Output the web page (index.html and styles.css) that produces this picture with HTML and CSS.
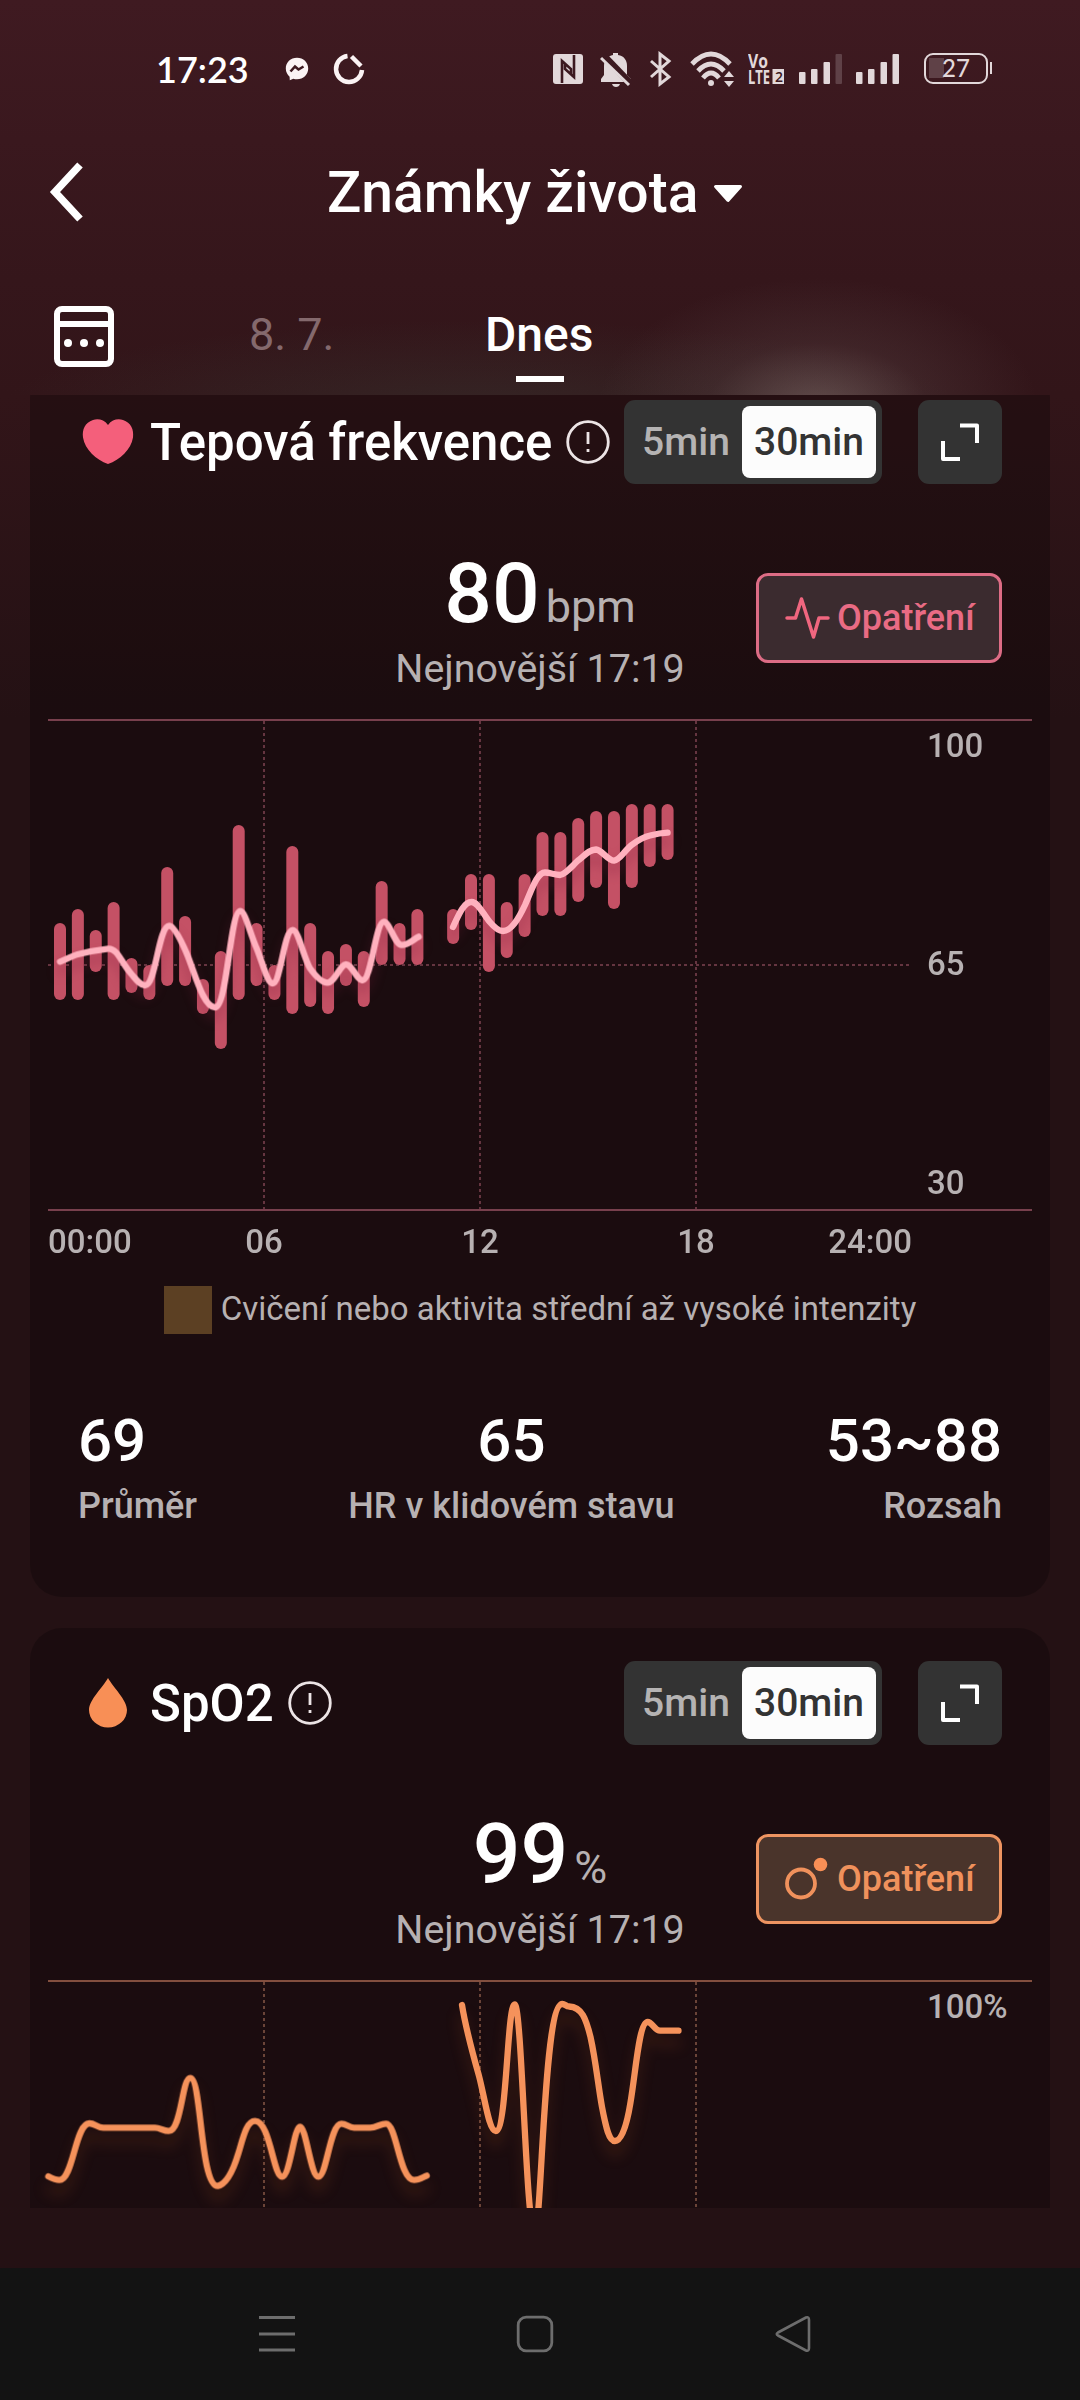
FILE: index.html
```
<!DOCTYPE html>
<html lang="cs">
<head>
  <meta charset="UTF-8" />
  <meta name="viewport" content="width=device-width, initial-scale=1.0"/>
  <title>Známky života</title>
  <link rel="stylesheet" href="styles.css">
</head>
<body>

  <header class="header">
    <div class="status">
      <span class="clock">17:23</span>
      <svg class="messenger" width="24" height="24" viewBox="0 0 24 24">
        <path d="M12 .8C5.600.8.8 5.400.8 11.500c0 3.300 1.500 6.200 3.800 8.200l.2 3.500 3.500-1.500c1.200.4 2.400.5 3.700.5 6.400 0 11.200-4.600 11.200-10.700S18.400.8 12 .8z" fill="#fbf3f4"/>
        <path d="M5.500 14.500l4.500-5 3.500 3 5-3" fill="none" stroke="#3d1920" stroke-width="2.600"/>
      </svg>
      <svg class="saver" width="32" height="32" viewBox="0 0 32 32" fill="none" stroke="#fbf3f4" stroke-width="4.500">
        <path d="M14.500 3A13 13 0 1 0 29 17"/>
        <path d="M18.500 3.500L28 13"/>
      </svg>

      <div class="status-right">
        <svg width="30" height="32" viewBox="0 0 30 32">
          <rect y="1" width="30" height="30" rx="3" fill="#e2d8da"/>
          <path d="M9 30V8l9 8v5M21 2v22l-9-8v-5" fill="none" stroke="#3c1920" stroke-width="2.600"/>
        </svg>
        <svg class="bell" width="32" height="36" viewBox="0 0 32 36">
          <path d="M4 24V15C4 9 8 5 13 4V2h5v2c6 1 9 5 9 11v9l4 4v3H1v-3z" fill="#e2d8da"/>
          <path d="M12 33h8q-1 3-4 3t-4-3z" fill="#e2d8da"/>
          <path d="M3 4l28 29" stroke="#3c1920" stroke-width="7"/>
          <path d="M1 7l28 27" stroke="#e2d8da" stroke-width="3"/>
        </svg>
        <svg class="bt" width="22" height="36" viewBox="0 0 22 36" fill="none" stroke="#e2d8da" stroke-width="3">
          <path d="M1 10l18 16-9 7V3l9 7L1 26"/>
        </svg>
        <svg class="wifi" width="46" height="36" viewBox="0 0 46 36" fill="none" stroke="#e2d8da" stroke-width="4.800">
          <path d="M2 13Q21-7 40 13"/>
          <path d="M8 20Q21 6 34 20"/>
          <path d="M13 27Q21 17 29 27"/>
          <circle cx="21" cy="32" r="3" fill="#e2d8da" stroke="none"/>
          <path d="M34 26l5-6 5 6zM34 30l5 6 5-6z" fill="#e2d8da" stroke="none"/>
        </svg>
        <svg class="volte" width="37" height="32" viewBox="0 0 37 32">
          <text x="0" y="14.500" textLength="20" lengthAdjust="spacingAndGlyphs">Vo</text>
          <text x="0" y="31" textLength="22" lengthAdjust="spacingAndGlyphs">LTE</text>
          <rect x="24.500" y="16" width="11.500" height="15" fill="#e2d8da"/>
          <text class="sim" x="27" y="29">2</text>
        </svg>
        <svg class="signal" width="44" height="32" viewBox="0 0 44 32" fill="#e2d8da">
          <rect y="19" width="6.500" height="12" rx="1"/>
          <rect x="12" y="16" width="6.500" height="15" rx="1"/>
          <rect x="24.500" y="9" width="6.500" height="22" rx="1"/>
          <rect x="36.500" y="1" width="6.500" height="30" rx="1" fill="#5f4147"/>
        </svg>
        <svg class="signal2" width="44" height="32" viewBox="0 0 44 32" fill="#e2d8da">
          <rect y="19" width="6.500" height="12" rx="1"/>
          <rect x="12" y="16" width="6.500" height="15" rx="1"/>
          <rect x="24.500" y="9" width="6.500" height="22" rx="1"/>
          <rect x="36.500" y="1" width="6.500" height="30" rx="1"/>
        </svg>
        <div class="battery">27</div>
      </div>
    </div>

    <div class="appbar">
      <svg class="back" width="38" height="62" viewBox="0 0 38 62">
        <path d="M32 4L7 31l25 27" fill="none" stroke="#fff" stroke-width="7.500"/>
      </svg>
      <h1>Známky života</h1>
      <svg class="caret" width="30" height="20" viewBox="0 0 30 20">
        <path d="M2.500 2.500h25L15 16.500z" fill="#fff" stroke="#fff" stroke-width="3" stroke-linejoin="round"/>
      </svg>
    </div>

    <div class="dates">
      <svg class="calendar" width="62" height="62" viewBox="0 0 62 62" fill="none" stroke="#fff" stroke-width="6">
        <rect x="4" y="4" width="54" height="55" rx="5"/>
        <path d="M4 19h54"/>
        <g fill="#fff" stroke="none">
          <circle cx="15" cy="38" r="4"/>
          <circle cx="31" cy="38" r="4"/>
          <circle cx="47" cy="38" r="4"/>
        </g>
      </svg>
      <span class="date">8. 7.</span>
      <span class="date active">Dnes</span>
    </div>
  </header>

  <main class="scroller">
    <section class="card heart">
      <div class="card-head">
        <svg class="card-icon" width="60" height="60" viewBox="0 0 60 60">
          <path d="M30 13C26 7.500 20 6.500 15 8 7 10.500 4 17.500 5 25.500c2 12 13 22.500 25 26.500 12-4 23-14.500 25-26.500 1-8-2-15-10-17.500C40 6.500 34 7.500 30 13z" fill="#f45f7b"/>
        </svg>
        <h2>Tepová frekvence</h2>
        <svg class="info" width="44" height="44" viewBox="0 0 44 44" fill="none" stroke="#ece4e5" stroke-width="2.800">
          <circle cx="22" cy="22" r="20.300"/>
          <path d="M22 12v12M22 29v3"/>
        </svg>
        <div class="toggle"><span>5min</span><span class="on">30min</span></div>
        <button class="expand">
          <svg width="40" height="40" viewBox="0 0 40 40" fill="none" stroke="#fff" stroke-width="4" stroke-linejoin="round">
            <path d="M20 3.500h17V21M3 19v18h17"/>
          </svg>
        </button>
      </div>

      <div class="reading">
        <div class="latest">
          <div class="value">80<small>bpm</small></div>
          <div class="time">Nejnovější 17:19</div>
        </div>
        <button class="measure">
          <svg width="46" height="46" viewBox="0 0 46 46" fill="none" stroke="#f0667f" stroke-width="3.500" stroke-linejoin="round" stroke-linecap="round">
            <path d="M3 23h8.500L17.500 4l12 38L35 23h9"/>
          </svg>
          Opatření
        </button>
      </div>

      <svg class="chart" width="1020" height="570" viewBox="30 700 1020 570">
        <path class="grid-dots" d="M264 721V1210M480 721V1210M696 721V1210"/>
        <path class="grid-dots" d="M48 965H912"/>
        <path class="grid-line" d="M48 720H1032M48 1210H1032"/>
        <g id="bars"></g>
        <g class="hr-line">
          <path transform="translate(30 700) scale(.33333)" stroke-width="19" d="M90 785C108 778 125 768 143 763C170 756 200 750 235 746C262 744 275 790 304 822C318 838 330 856 345 856C378 856 385 677 418 677C432 677 455 725 470 760C495 820 520 922 555 922C592 922 600 633 631 633C645 633 660 700 680 745C700 795 712 850 728 850C752 850 762 690 788 690C805 690 820 770 840 805C858 830 875 848 892 848C915 848 930 793 948 793C965 793 982 841 997 841C1025 841 1036 665 1062 665C1078 665 1095 735 1115 735C1135 735 1150 718 1166 710"/>
          <path stroke-width="6.300" d="M453 927C459 914 464 902 471.600 902C478 902 483 914 489.800 922C494 927 498 931 503 931C511 931 518 920 525 905C532 889 537 872.500 545 872.500C550 872.500 555 875 560 875C566 874 571 867 578 860.500C584 856 589 849.500 596 849.500C602 850 608 860.700 614 860.700C620 860 624 851 631.600 845C637 841 643 837 650 835.500C656 834 661 833 667.600 832.700"/>
        </g>
        <g class="axis">
          <text x="927" y="757">100</text>
          <text x="927" y="975">65</text>
          <text x="927" y="1194">30</text>
          <text x="48" y="1252.500">00:00</text>
          <text x="264" y="1252.500" text-anchor="middle">06</text>
          <text x="480" y="1252.500" text-anchor="middle">12</text>
          <text x="696" y="1252.500" text-anchor="middle">18</text>
          <text x="912" y="1252.500" text-anchor="end">24:00</text>
        </g>
      </svg>

      <div class="legend"><i></i><span>Cvičení nebo aktivita střední až vysoké intenzity</span></div>

      <div class="stats">
        <div><strong>69</strong><span>Průměr</span></div>
        <div class="mid"><strong>65</strong><span>HR v klidovém stavu</span></div>
        <div class="end"><strong>53~88</strong><span>Rozsah</span></div>
      </div>
    </section>

    <section class="card spo2">
      <div class="card-head">
        <svg class="card-icon" width="60" height="60" viewBox="0 0 60 60">
          <path d="M30 5C35 14 49 27 49 37a19 17.500 0 0 1-38 0C11 27 25 14 30 5z" fill="#f88f56"/>
        </svg>
        <h2>SpO2</h2>
        <svg class="info" width="44" height="44" viewBox="0 0 44 44" fill="none" stroke="#ece4e5" stroke-width="2.800">
          <circle cx="22" cy="22" r="20.300"/>
          <path d="M22 12v12M22 29v3"/>
        </svg>
        <div class="toggle"><span>5min</span><span class="on">30min</span></div>
        <button class="expand">
          <svg width="40" height="40" viewBox="0 0 40 40" fill="none" stroke="#fff" stroke-width="4" stroke-linejoin="round">
            <path d="M20 3.500h17V21M3 19v18h17"/>
          </svg>
        </button>
      </div>

      <div class="reading">
        <div class="latest">
          <div class="value">99<small>%</small></div>
          <div class="time">Nejnovější 17:19</div>
        </div>
        <button class="measure">
          <svg width="46" height="46" viewBox="0 0 46 46">
            <circle cx="17" cy="27.500" r="14" fill="none" stroke="#f0915c" stroke-width="3.800"/>
            <circle cx="36.500" cy="8.500" r="6.800" fill="#f88f56"/>
          </svg>
          Opatření
        </button>
      </div>

      <svg class="chart" width="1020" height="570" viewBox="30 1961 1020 570">
        <path class="grid-dots" d="M264 1982V2471M480 1982V2471M696 1982V2471"/>
        <path class="grid-line" d="M48 1981H1032"/>
        <g class="spo2-line">
          <path transform="translate(30 1960) scale(.33333)" stroke-width="19" d="M55 649C70 657 78 660 88 660C130 660 135 490 178 490C195 490 200 503 220 503L375 503C390 503 400 513 416 513C455 513 455 354 481 354C515 354 510 678 563 678C590 672 610 630 625 580C640 530 650 483 675 483C720 483 730 650 756 650C780 650 792 500 810 500C828 500 842 650 865 650C890 650 900 491 934 491C950 491 955 503 972 503L1020 503C1040 503 1050 491 1068 491C1100 491 1108 660 1152 660C1167 660 1178 652 1190 647"/>
          <path stroke-width="6.300" d="M462 2005C466 2030 472 2051 479 2076C485 2099 489 2131 495.800 2131C507 2131 507 2004.500 514.700 2004.500C522 2004.500 526 2232 534.500 2232C542 2232 543 2004 562.300 2004C565 2004 566 2006 569 2006.500C582 2007 586 2019 590.500 2037C596 2062 598 2085 602 2107C606 2128 609 2141 615 2141C622 2141 627 2124 630.400 2103C636 2070 639 2022 647.700 2022C652 2022 655 2030.700 660 2030.700L678.500 2030.700"/>
        </g>
        <g class="axis">
          <text x="927" y="2018">100%</text>
        </g>
      </svg>
    </section>
  </main>

  <nav class="navbar">
    <svg width="38" height="40" viewBox="0 0 38 40" fill="none" stroke="#6d6d6d" stroke-width="3">
      <path d="M1 3.500h36M1 20h36M1 36h36"/>
    </svg>
    <svg width="38" height="40" viewBox="0 0 38 40" fill="none" stroke="#6d6d6d" stroke-width="2.800">
      <rect x="2.200" y="3.200" width="33.600" height="33.600" rx="8"/>
    </svg>
    <svg width="38" height="40" viewBox="0 0 38 40" fill="none" stroke="#6d6d6d" stroke-width="2.600" stroke-linejoin="round">
      <path d="M4 18.500L32 3.500Q35 2.500 35 6V34Q35 37.500 32 36.500L4 21.500Q1.500 20 4 18.500z"/>
    </svg>
  </nav>

  <script>
    // [max, min] bpm per half hour slot, null = no data
    const hr = [
      [71, 60], [73, 60], [70, 64], [74, 60], [66, 61], [65, 60], [79, 62], [72, 62],
      [63, 58], [67, 53], [85, 60], [71, 62], [65, 60], [82, 58], [71, 59], [67, 58],
      [68, 62], [67, 59], [77, 65], [71, 65], [73, 65], null, [73, 68], [78, 70],
      [78, 64], [74, 66], [78, 69], [84, 72], [84, 72], [86, 74], [87, 76], [87, 73],
      [88, 76], [88, 79], [88, 80]
    ];

    function yPos(bpm) {
      return 1210 - (bpm - 30) * 7;
    }

    const bars = document.getElementById('bars');
    hr.forEach((slot, i) => {
      if (!slot) return;
      const rect = document.createElementNS('http://www.w3.org/2000/svg', 'rect');
      rect.setAttribute('x', 54 + i * 17.87);
      rect.setAttribute('y', yPos(slot[0]));
      rect.setAttribute('width', 12);
      rect.setAttribute('height', yPos(slot[1]) - yPos(slot[0]));
      rect.setAttribute('rx', 6);
      bars.appendChild(rect);
    });
  </script>

</body>
</html>
```
FILE: styles.css
```
* {
  box-sizing: border-box;
}

body {
  margin: 0;
  width: 1080px;
  height: 2400px;
  overflow: hidden;
  background: linear-gradient(#3f1a21 0, #35161b 280px, #321519 395px, #241114 720px, #241114 100%);
  font-family: Roboto, sans-serif;
  color: #fff;
}

svg {
  display: block;
  flex: none;
}

h1, h2 {
  margin: 0;
  font-weight: 500;
  white-space: nowrap;
}

button {
  padding: 0;
  border: none;
  font-family: inherit;
  color: inherit;
}

.header {
  height: 395px;
  background:
    radial-gradient(ellipse 220px 130px at 818px 408px, rgba(160,145,140,0.42), rgba(120,105,105,0.17) 50%, transparent),
    radial-gradient(ellipse 480px 90px at 480px 410px, rgba(60,75,65,0.3), transparent);
}

/* status bar */
.status {
  height: 137px;
  display: flex;
  align-items: center;
  padding: 0 92px 0 156px;
}

.clock {
  width: 128px;
  font: 600 36px Lato, sans-serif;
}

.messenger { margin-left: 1px; }
.saver { margin-left: 24px; }

.status-right {
  margin-left: auto;
  display: flex;
  align-items: center;
  color: #e2d8da;
}

.bell { margin-left: 17px; }
.bt { margin-left: 18px; }
.wifi { margin-left: 18px; }

.volte {
  margin-left: 12px;
  fill: #e2d8da;
  font: 700 19px "Open Sans", sans-serif;
}

.volte .sim {
  fill: #3c1920;
  font-size: 14px;
  font-weight: 600;
}

.signal { margin-left: 14px; }
.signal2 { margin-left: 13px; }

.battery {
  position: relative;
  margin-left: 24px;
  width: 64px;
  height: 31px;
  border: 2.5px solid #e2d8da;
  border-radius: 9px;
  background: linear-gradient(#5f4147, #5f4147) 3px 3px / 15px 20px no-repeat;
  font: 500 24px/26px Lato, sans-serif;
  text-align: center;
}

.battery::after {
  content: "";
  position: absolute;
  right: -6px;
  top: 7px;
  width: 2.5px;
  height: 12px;
  background: #e2d8da;
}

/* title */
.appbar {
  height: 110px;
  display: flex;
  align-items: center;
  padding-left: 48px;
}

.appbar h1 {
  margin-left: 241px;
  padding-top: 1px;
  font-size: 57px;
  line-height: 110px;
}

.caret {
  margin: 3px 0 0 15px;
}

.dates {
  display: flex;
  align-items: center;
  height: 148px;
  padding: 30px 0 0 53px;
}

.date {
  margin: -3px 0 0 134px;
  width: 90px;
  font-size: 45px;
  color: #84696d;
  white-space: nowrap;
}

.date.active {
  position: relative;
  margin-left: 146px;
  width: auto;
  font-size: 48px;
  font-weight: 500;
  color: #fff;
}

.date.active::after {
  content: "";
  position: absolute;
  left: 31px;
  top: 70px;
  width: 48px;
  height: 6px;
  background: #fff;
}

/* cards */
.scroller {
  height: 1813px;
  overflow: hidden;
}

.card {
  height: 1230px;
  margin: 0 30px 31px;
  padding-top: 33px;
  border-radius: 32px;
  background: rgba(0,0,0,0.25);
}

.card:first-child {
  margin-top: -28px;
}

.card-head {
  display: flex;
  align-items: center;
  height: 84px;
  padding: 0 48px 0 48px;
}

.card-head h2 {
  margin-left: 12px;
  font-size: 51px;
}

.info { margin-left: 14px; }

.toggle {
  display: flex;
  align-items: center;
  margin-left: auto;
  width: 258px;
  height: 84px;
  padding: 6px;
  border-radius: 11px;
  background: #333;
  font-size: 39px;
  font-weight: 500;
  color: #b5b3b3;
}

.toggle span {
  width: 112px;
  padding-top: 1px;
  line-height: 71px;
  text-align: center;
}

.toggle .on {
  width: 134px;
  border-radius: 8px;
  background: #fcfcfc;
  color: #333;
}

.expand {
  display: flex;
  align-items: center;
  justify-content: center;
  margin-left: 36px;
  width: 84px;
  height: 84px;
  border-radius: 11px;
  background: #333;
}

.reading {
  display: grid;
  grid-template-columns: 1fr auto 1fr;
  height: 216px;
  padding: 59px 48px 0;
}

.latest {
  grid-column: 2;
  text-align: center;
  color: #b7b1b2;
}

.value {
  font-size: 84px;
  font-weight: 500;
  line-height: 102px;
  color: #fff;
}

.value small {
  margin-left: 6px;
  font-size: 45px;
  font-weight: 400;
  line-height: 1;
  color: #b7b1b2;
}

.time {
  font-size: 39.4px;
  line-height: 48px;
}

.measure {
  display: flex;
  align-items: center;
  justify-self: end;
  margin-top: 30px;
  width: 246px;
  height: 90px;
  padding-left: 25px;
  gap: 7px;
  border: 3px solid #dd6c85;
  border-radius: 12px;
  background: #3b2b2f;
  font-size: 36px;
  font-weight: 500;
  color: #e96b84;
}

.spo2 .measure {
  border-color: #ee9461;
  background: #4a342b;
  color: #f0915c;
}

/* charts */
.grid-line {
  fill: none;
  stroke: #78404d;
  stroke-width: 2;
}

.grid-dots {
  fill: none;
  stroke: #653540;
  stroke-width: 2;
  stroke-dasharray: 3 3;
}

.spo2 .grid-line { stroke: #834f3f; }
.spo2 .grid-dots { stroke: #6b4438; }

#bars { fill: #c45165; }

.hr-line {
  fill: none;
  stroke: #ffb1be;
  stroke-linecap: round;
  filter: drop-shadow(0 9px 6px rgba(130,30,60,0.35));
}

.spo2-line {
  fill: none;
  stroke: #f5925b;
  stroke-linecap: round;
  filter: drop-shadow(0 12px 7px rgba(200,90,30,0.2));
}

.axis {
  fill: #b7b1b2;
  font-size: 33px;
  font-weight: 500;
}

.legend {
  display: flex;
  align-items: center;
  justify-content: center;
  gap: 9px;
  height: 48px;
  margin-top: 16px;
  font-size: 33px;
  color: #b7b1b2;
}

.legend i {
  width: 48px;
  height: 48px;
  background: #5c4023;
}

.legend span {
  padding-bottom: 3px;
}

.stats {
  display: flex;
  justify-content: space-between;
  padding: 72px 48px 0;
}

.stats strong,
.stats span {
  display: block;
}

.stats strong {
  font-size: 60px;
  font-weight: 500;
  line-height: 70px;
}

.stats span {
  margin-top: 5px;
  font-size: 36px;
  font-weight: 500;
  line-height: 50px;
  color: #b7b1b2;
}

.mid { text-align: center; }
.end { text-align: right; }

/* system navigation */
.navbar {
  display: flex;
  align-items: center;
  gap: 220px;
  height: 132px;
  margin-top: 60px;
  padding-left: 258px;
  background: #131313;
}
```
